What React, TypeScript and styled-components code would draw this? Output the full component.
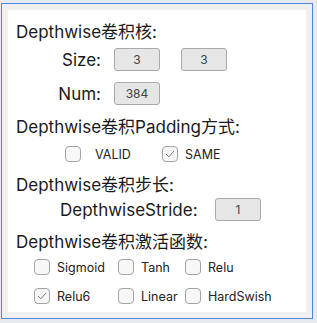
import styled, { createGlobalStyle } from "styled-components";

const GlobalStyle = createGlobalStyle`
  html, body {
    margin: 0;
    padding: 0;
    background: #e7eaef;
  }
  body {
    font-family: Inter, "Noto Sans CJK SC", sans-serif;
    color: #1a1a1a;
  }
`;

const Frame = styled.div`
  margin: 3px 0 0 1px;
  width: 312px;
  height: 316px;
  box-sizing: border-box;
  border: 1px solid #4b87e3;
  background: #efefef;
  padding: 6px;
`;

const Panel = styled.div`
  background: #fff;
  height: 100%;
  box-sizing: border-box;
  padding: 0 0 0 8px;
  display: flex;
  flex-direction: column;
`;

const Heading = styled.div<{ $mt: number }>`
  margin-top: ${(p) => p.$mt}px;
  height: 24px;
  line-height: 24px;
  font-size: 17px;
  white-space: nowrap;
`;

const FieldGrid = styled.div<{ $mt: number }>`
  margin-top: ${(p) => p.$mt}px;
  display: grid;
  grid-template-columns: 85px 46px 46px;
  column-gap: 13px;
  align-items: center;

  & > :nth-child(3) {
    margin-left: 8px;
  }
`;

const Label = styled.span`
  font-size: 17px;
  text-align: right;
  white-space: nowrap;
`;

const ValueBox = styled.div`
  width: 46px;
  height: 23px;
  box-sizing: border-box;
  border: 1px solid #a9a9a9;
  border-radius: 3px;
  background: #e6e6e6;
  font-size: 12px;
  color: #444;
  display: flex;
  align-items: center;
  justify-content: center;
`;

const StrideRow = styled.div<{ $mt: number }>`
  margin-top: ${(p) => p.$mt}px;
  padding-left: 44px;
  display: grid;
  grid-template-columns: 155px 46px;
  align-items: center;

  & > span {
    text-align: left;
  }
`;

const OptionGrid = styled.div<{ $mt: number; $left: number; $cols: string }>`
  margin-top: ${(p) => p.$mt}px;
  padding-left: ${(p) => p.$left}px;
  display: grid;
  grid-template-columns: ${(p) => p.$cols};
  height: 18px;
  align-items: center;
`;

const Option = styled.label<{ $gap: number }>`
  display: flex;
  align-items: center;
  gap: ${(p) => p.$gap}px;
  font-size: 12.5px;
  white-space: nowrap;
  color: #222;
`;

const Box = styled.span`
  width: 16px;
  height: 16px;
  box-sizing: border-box;
  border: 1px solid #a3a3a3;
  border-radius: 4px;
  background: #f7f7f7;
  display: flex;
  align-items: center;
  justify-content: center;
`;

const Check = ({ on }: { on?: boolean }) => (
  <Box>
    {on && (
      <svg width="10" height="8" viewBox="0 0 10 8">
        <path d="M1 4 L3.8 6.8 L9 1" fill="none" stroke="#777" strokeWidth="1" />
      </svg>
    )}
  </Box>
);

const Opt = ({ text, on, gap = 7 }: { text: string; on?: boolean; gap?: number }) => (
  <Option $gap={gap}>
    <Check on={on} />
    {text}
  </Option>
);

export default function App() {
  return (
    <>
      <GlobalStyle />
      <Frame>
        <Panel>
          <Heading $mt={10}>Depthwise卷积核:</Heading>
          <FieldGrid $mt={4}>
            <Label>Size:</Label>
            <ValueBox>3</ValueBox>
            <ValueBox>3</ValueBox>
          </FieldGrid>
          <FieldGrid $mt={11}>
            <Label>Num:</Label>
            <ValueBox>384</ValueBox>
          </FieldGrid>
          <Heading $mt={10}>Depthwise卷积Padding方式:</Heading>
          <OptionGrid $mt={6} $left={49} $cols="97px auto">
            <Opt text="VALID" gap={14} />
            <Opt text="SAME" on />
          </OptionGrid>
          <Heading $mt={10}>Depthwise卷积步长:</Heading>
          <StrideRow $mt={1}>
            <Label>DepthwiseStride:</Label>
            <ValueBox>1</ValueBox>
          </StrideRow>
          <Heading $mt={9}>Depthwise卷积激活函数:</Heading>
          <OptionGrid $mt={4} $left={18} $cols="84px 67px auto">
            <Opt text="Sigmoid" />
            <Opt text="Tanh" />
            <Opt text="Relu" />
          </OptionGrid>
          <OptionGrid $mt={11} $left={18} $cols="84px 67px auto">
            <Opt text="Relu6" on />
            <Opt text="Linear" />
            <Opt text="HardSwish" />
          </OptionGrid>
        </Panel>
      </Frame>
    </>
  );
}
